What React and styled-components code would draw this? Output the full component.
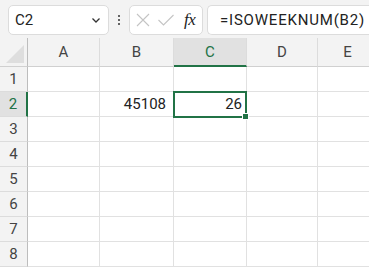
import React from 'react'
import styled, { createGlobalStyle } from 'styled-components'

const Global = createGlobalStyle`
  body {
    margin: 0;
    background: #ffffff;
    font-family: Roboto, "Liberation Sans", sans-serif;
  }
`

const Page = styled.div`
  width: 369px;
  height: 271px;
  overflow: hidden;
  background: #ffffff;
`

const Toolbar = styled.div`
  display: flex;
  align-items: center;
  height: 30px;
  padding: 5px 0 3px 8px;
  background: #f3f3f3;
`

const Box = styled.div`
  height: 30px;
  box-sizing: border-box;
  display: flex;
  align-items: center;
  background: #ffffff;
  border: 1px solid #dcdcdc;
  border-radius: 5px;
`

const NameBox = styled(Box)`
  width: 101px;
  justify-content: space-between;
  padding: 0 6px 0 6px;
  font-size: 15px;
  color: #222;
`

const Dots = styled.div`
  display: flex;
  flex-direction: column;
  gap: 2px;
  margin: 0 9px 0 9px;
  span {
    width: 2px;
    height: 2px;
    background: #333;
    border-radius: 1px;
  }
`

const IconGroup = styled(Box)`
  width: 74px;
  padding: 0 0 0 5px;
  gap: 6px;
`

const Fx = styled.span`
  font-family: "Liberation Serif", "DejaVu Serif", serif;
  font-style: italic;
  font-size: 17px;
  color: #222;
  margin-left: 3px;
  letter-spacing: -0.5px;
`

const FormulaBox = styled(Box)`
  flex: 1;
  margin-left: 4px;
  padding-left: 12px;
  border-right: none;
  border-radius: 5px 0 0 5px;
  font-size: 15px;
  letter-spacing: 0.8px;
  color: #222;
  white-space: nowrap;
`

const Grid = styled.div`
  display: grid;
  grid-template-columns: 28px 72px 74px 73px 71px 60px;
  grid-template-rows: 29px repeat(8, 25px);
  position: relative;
`

const Corner = styled.div`
  background: #f3f3f3;
  border-right: 1px solid #bdbdbd;
  border-bottom: 1px solid #d0d0d0;
  box-sizing: border-box;
  position: relative;
  &::after {
    content: '';
    position: absolute;
    right: 3px;
    bottom: 3px;
    width: 0;
    height: 0;
    border-left: 18px solid transparent;
    border-bottom: 18px solid #dedede;
  }
`

const ColHead = styled.div`
  display: flex;
  align-items: center;
  justify-content: center;
  box-sizing: border-box;
  background: ${p => (p.active ? '#e1e1e1' : '#f3f3f3')};
  border-right: 1px solid #dcdcdc;
  border-bottom: ${p => (p.active ? '2px solid #217346' : '1px solid #d0d0d0')};
  color: ${p => (p.active ? '#217346' : '#444')};
  font-size: 15px;
  padding-top: ${p => (p.active ? '1px' : '0')};
`

const RowHead = styled.div`
  display: flex;
  align-items: center;
  justify-content: center;
  box-sizing: border-box;
  background: ${p => (p.active ? '#e1e1e1' : '#f3f3f3')};
  border-right: ${p => (p.active ? '2px solid #217346' : '1px solid #bdbdbd')};
  border-bottom: 1px solid #dcdcdc;
  color: ${p => (p.active ? '#217346' : '#444')};
  font-size: 15px;
`

const Cell = styled.div`
  display: flex;
  align-items: center;
  justify-content: flex-end;
  box-sizing: border-box;
  border-right: 1px solid #e1e1e1;
  border-bottom: 1px solid #e1e1e1;
  padding-right: ${p => (p.selected ? '4px' : '7px')};
  font-size: 15px;
  color: #222;
`

const Selection = styled.div`
  position: absolute;
  left: 173px;
  top: 53px;
  width: 74px;
  height: 27px;
  box-sizing: border-box;
  border: 2px solid #217346;
  pointer-events: none;
  &::after {
    content: '';
    position: absolute;
    right: -4px;
    bottom: -4px;
    width: 5px;
    height: 5px;
    background: #217346;
    border: 1px solid #ffffff;
  }
`

const cols = ['A', 'B', 'C', 'D', 'E']
const values = { B2: '45108', C2: '26' }

export default function App () {
  return (
    <Page>
      <Global />
      <Toolbar>
        <NameBox>
          <span>C2</span>
          <svg width="12" height="12" viewBox="0 0 12 12">
            <path d="M2.5 4.5 L6 8 L9.5 4.5" fill="none" stroke="#333" strokeWidth="1.3" />
          </svg>
        </NameBox>
        <Dots><span /><span /><span /></Dots>
        <IconGroup>
          <svg width="16" height="16" viewBox="0 0 16 16">
            <path d="M2 2 L14 14 M14 2 L2 14" stroke="#c4c4c4" strokeWidth="1.1" fill="none" />
          </svg>
          <svg width="18" height="16" viewBox="0 0 18 16">
            <path d="M1.5 8 L6.5 13 L16.5 3" stroke="#c4c4c4" strokeWidth="1.1" fill="none" />
          </svg>
          <Fx>fx</Fx>
        </IconGroup>
        <FormulaBox>=ISOWEEKNUM(B2)</FormulaBox>
      </Toolbar>
      <Grid>
        <Corner />
        {cols.map(c => <ColHead key={c} active={c === 'C'}>{c}</ColHead>)}
        {[1, 2, 3, 4, 5, 6, 7, 8].map(r => (
          <React.Fragment key={r}>
            <RowHead active={r === 2}>{r}</RowHead>
            {cols.map(c => (
              <Cell key={c} selected={c + r === 'C2'}>{values[c + r] || ''}</Cell>
            ))}
          </React.Fragment>
        ))}
        <Selection />
      </Grid>
    </Page>
  )
}
